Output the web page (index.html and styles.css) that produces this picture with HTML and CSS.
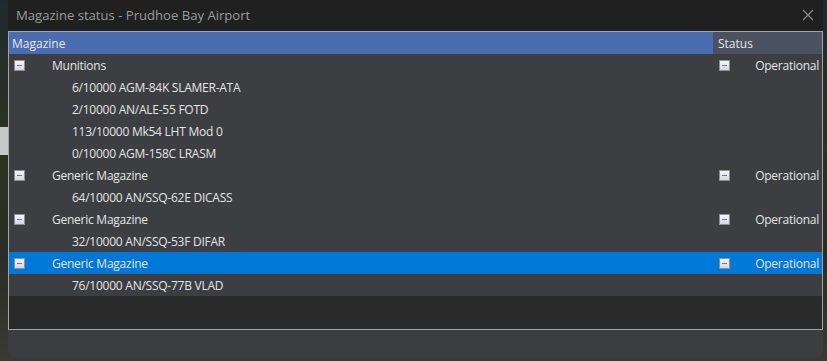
FILE: index.html
```html
<!DOCTYPE html>
<html>
<head>
<meta charset="utf-8">
<link rel="stylesheet" href="styles.css">
</head>
<body>
<div class="backdrop">
  <div class="bg-strip"></div>
  <div class="window">
    <div class="titlebar">
      <span class="title">Magazine status - Prudhoe Bay Airport</span>
      <svg class="close" width="12" height="12" viewBox="0 0 12 12"><path d="M1 1L11 11M11 1L1 11" stroke="#8a8a8a" stroke-width="1.2"/></svg>
    </div>
    <div class="list">
      <div class="head">
        <div class="h-mag">Magazine</div>
        <div class="h-status">Status</div>
      </div>
      <div class="rows">
        <div class="row parent"><span class="box"></span><span class="name">Munitions</span><span class="status"><span class="box"></span><span class="st">Operational</span></span></div>
        <div class="row child"><span class="name">6/10000 AGM-84K SLAMER-ATA</span></div>
        <div class="row child"><span class="name">2/10000 AN/ALE-55 FOTD</span></div>
        <div class="row child"><span class="name">113/10000 Mk54 LHT Mod 0</span></div>
        <div class="row child"><span class="name">0/10000 AGM-158C LRASM</span></div>
        <div class="row parent"><span class="box"></span><span class="name">Generic Magazine</span><span class="status"><span class="box"></span><span class="st">Operational</span></span></div>
        <div class="row child"><span class="name">64/10000 AN/SSQ-62E DICASS</span></div>
        <div class="row parent"><span class="box"></span><span class="name">Generic Magazine</span><span class="status"><span class="box"></span><span class="st">Operational</span></span></div>
        <div class="row child"><span class="name">32/10000 AN/SSQ-53F DIFAR</span></div>
        <div class="row parent selected"><span class="box"></span><span class="name">Generic Magazine</span><span class="status"><span class="box"></span><span class="st">Operational</span></span></div>
        <div class="row child"><span class="name">76/10000 AN/SSQ-77B VLAD</span></div>
      </div>
      <div class="empty"></div>
    </div>
  </div>
</div>
</body>
</html>
```
FILE: styles.css
```css
html, body {
  margin: 0;
  padding: 0;
  width: 827px;
  height: 361px;
  overflow: hidden;
  background: #2c3022;
  font-family: "Open Sans", "Noto Sans", sans-serif;
}
.backdrop {
  position: relative;
  width: 827px;
  height: 361px;
  background: linear-gradient(180deg, #1f2a30 0%, #2d3320 40%, #2a2d24 70%, #3a3a30 100%);
}
.bg-strip {
  position: absolute;
  left: 0;
  top: 127px;
  width: 8px;
  height: 28px;
  background: #c8c8c8;
}
.window {
  position: absolute;
  left: 8px;
  top: 0;
  width: 815px;
  height: 358px;
  background: #3b3d41;
  border-radius: 0 0 8px 8px;
  display: flex;
  flex-direction: column;
  overflow: hidden;
}
.titlebar {
  height: 30px;
  flex: none;
  background: #202020;
  display: flex;
  align-items: center;
  justify-content: space-between;
  padding: 0 9px 1px 8px;
}
.title {
  color: #9b9b9b;
  font-size: 13.1px;
  letter-spacing: 0;
}
.close { display: block; }
.list {
  border: 1px solid #a4a4a4;
  height: 297px;
  flex: none;
  display: flex;
  flex-direction: column;
}
.head {
  height: 22px;
  display: flex;
  font-size: 12px;
  color: #e6e6e6;
}
.h-mag {
  flex: 1;
  background: #4a6db1;
  padding-left: 3px;
  line-height: 23px;
}
.h-status {
  width: 104px;
  background: #4a5262;
  padding-left: 5px;
  line-height: 23px;
}
.rows {
  background: #3c3e42;
  display: flex;
  flex-direction: column;
}
.row {
  height: 22px;
  display: flex;
  align-items: center;
  font-size: 12px;
  color: #e4e4e4;
  letter-spacing: -0.25px;
  padding-top: 1px;
  box-sizing: border-box;
}
.row.selected { background: #0078d7; }
.box {
  width: 9px;
  height: 9px;
  border: 1px solid #8e8e96;
  background: linear-gradient(180deg, #f4f4f6, #d6d8de);
  position: relative;
  flex: none;
  box-sizing: content-box;
  margin-top: -1px;
}
.box::after {
  content: "";
  position: absolute;
  left: 2px;
  right: 2px;
  top: 4px;
  height: 1px;
  background: #6a78a8;
}
.parent > .box { margin-left: 5px; }
.parent > .name { margin-left: 27px; flex: 1; }
.child > .name { margin-left: 63px; }
.status {
  width: 104px;
  display: flex;
  align-items: center;
}
.status .box { margin-left: 1px; }
.st { flex: 1; text-align: right; padding-right: 3px; }
.empty {
  flex: 1;
  background: #2a2a2b;
}
```
